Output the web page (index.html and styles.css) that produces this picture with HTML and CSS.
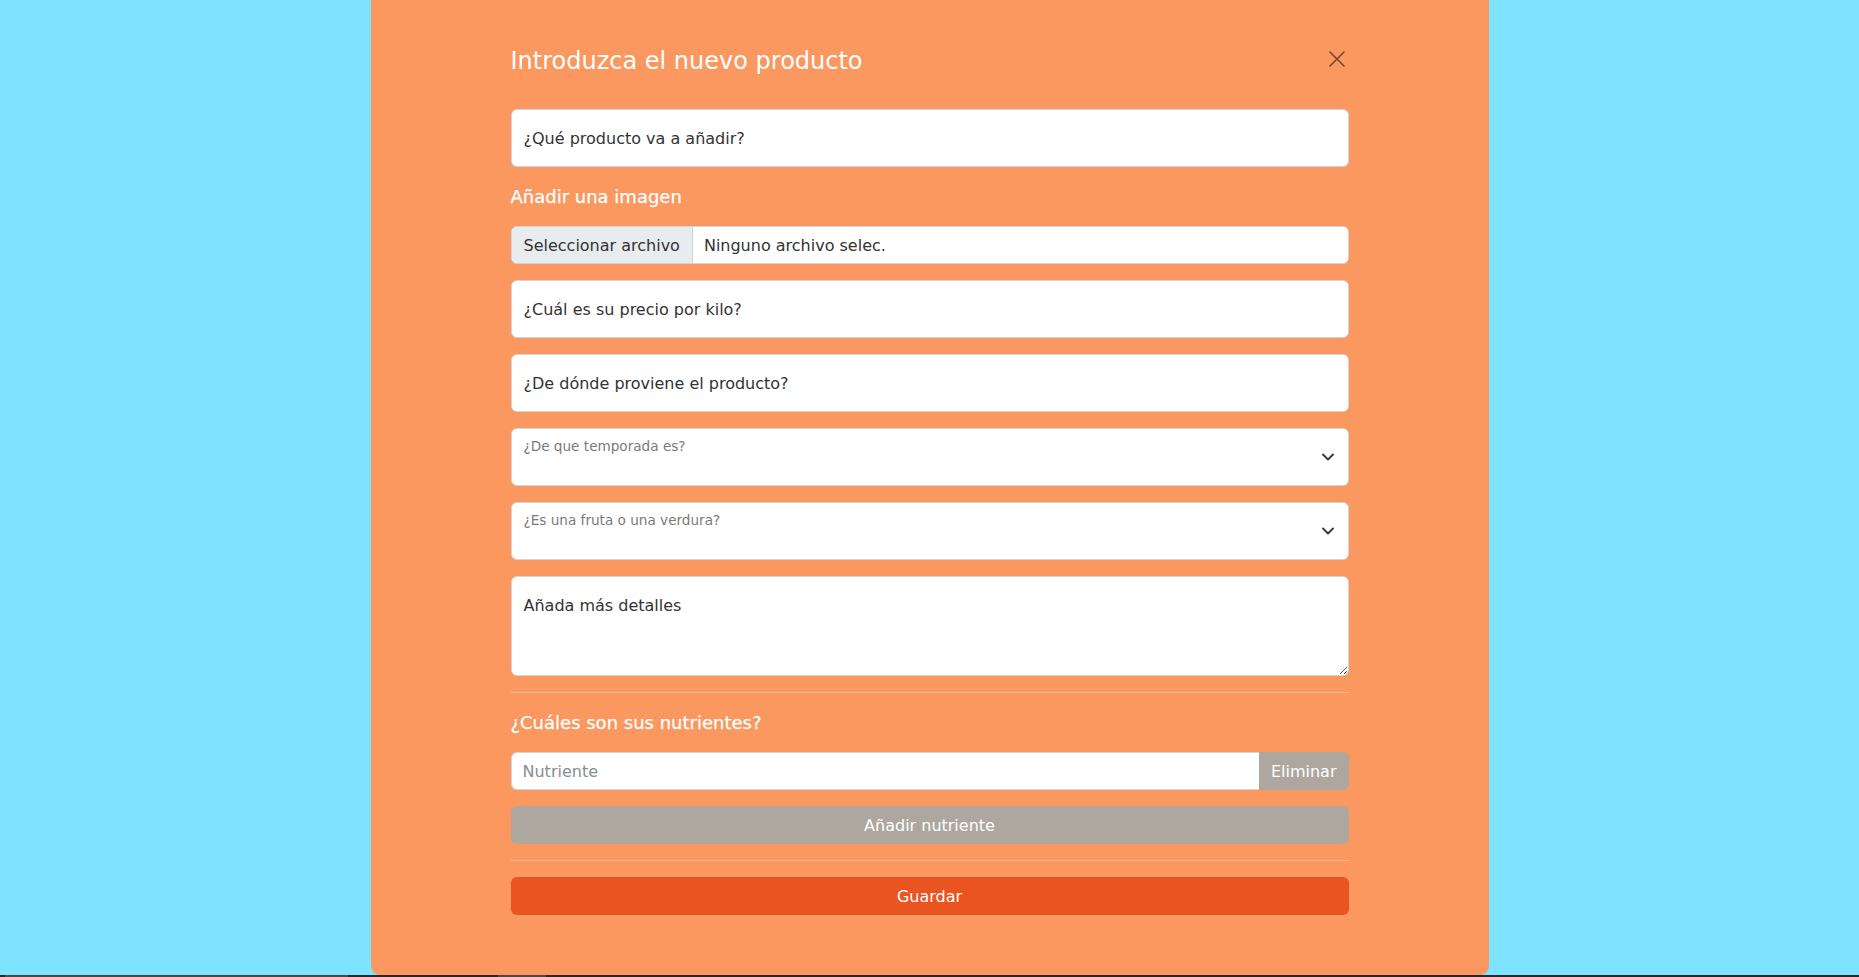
FILE: index.html
```html
<!DOCTYPE html>
<html lang="es">
<head>
<meta charset="utf-8">
<title>Nuevo producto</title>
<link rel="stylesheet" href="styles.css">
</head>
<body>
<main class="page">
  <section class="modal">
    <header class="modal-header">
      <h1 class="modal-title">Introduzca el nuevo producto</h1>
      <button class="btn-close" type="button" aria-label="Cerrar">
        <svg width="16" height="16" viewBox="0 0 16 16" aria-hidden="true"><path d="M1 1 15 15M15 1 1 15" stroke="#000" stroke-width="1.6" stroke-linecap="round" fill="none"/></svg>
      </button>
    </header>

    <form class="form">
      <input class="field" type="text" placeholder="¿Qué producto va a añadir?">

      <div class="section-label">Añadir una imagen</div>
      <div class="file">
        <span class="file-btn">Seleccionar archivo</span>
        <span class="file-name">Ninguno archivo selec.</span>
      </div>

      <input class="field" type="text" placeholder="¿Cuál es su precio por kilo?">
      <input class="field" type="text" placeholder="¿De dónde proviene el producto?">

      <div class="select">
        <span class="select-label">¿De que temporada es?</span>
        <svg class="chevron" width="12" height="8" viewBox="0 0 12 8" aria-hidden="true"><path d="M1 1.5 6 6.5 11 1.5" stroke="#343a40" stroke-width="1.9" stroke-linecap="round" stroke-linejoin="round" fill="none"/></svg>
      </div>
      <div class="select">
        <span class="select-label">¿Es una fruta o una verdura?</span>
        <svg class="chevron" width="12" height="8" viewBox="0 0 12 8" aria-hidden="true"><path d="M1 1.5 6 6.5 11 1.5" stroke="#343a40" stroke-width="1.9" stroke-linecap="round" stroke-linejoin="round" fill="none"/></svg>
      </div>

      <textarea class="details" placeholder="Añada más detalles"></textarea>

      <hr class="rule">

      <div class="section-title">¿Cuáles son sus nutrientes?</div>
      <div class="input-group">
        <input class="nutrient" type="text" placeholder="Nutriente">
        <button class="btn btn-secondary btn-remove" type="button">Eliminar</button>
      </div>
      <button class="btn btn-secondary btn-block" type="button">Añadir nutriente</button>

      <hr class="rule">

      <button class="btn btn-primary btn-block" type="button">Guardar</button>
    </form>
  </section>
</main>
<div class="taskbar"></div>
</body>
</html>
```

FILE: styles.css
```css
* { box-sizing: border-box; }

html, body {
  margin: 0;
  height: 977px;
  overflow: hidden;
}

body {
  background: #7de3ff;
  font-family: "DejaVu Sans", Verdana, sans-serif;
  font-size: 16px;
  color: #333;
  display: flex;
  flex-direction: column;
}

.page {
  flex: 1;
  display: flex;
  justify-content: center;
}

.modal {
  width: 1118px;
  height: 975px;
  background: #fa9860;
  border-radius: 0 0 9px 9px;
  padding: 0 140px;
}

.modal-header {
  display: flex;
  justify-content: space-between;
  align-items: flex-start;
  padding-top: 47px;
  margin-bottom: 33px;
}

.modal-title {
  margin: 0;
  font-size: 24px;
  line-height: 29px;
  font-weight: 400;
  color: #fff;
}

.btn-close {
  width: 24px;
  height: 24px;
  margin-top: 0;
  padding: 0;
  border: 0;
  background: transparent;
  opacity: 0.52;
  display: flex;
  align-items: center;
  justify-content: center;
}

.form {
  display: flex;
  flex-direction: column;
}

.field {
  height: 58px;
  margin: 0 0 16px;
  padding: 0 12px;
  border: 1px solid #ced4da;
  border-radius: 6px;
  background: #fff;
  font: inherit;
  color: #333;
}

.field::placeholder,
.details::placeholder {
  color: #333;
  opacity: 1;
}

.section-label {
  color: #fff;
  font-size: 18px;
  line-height: 27px;
  margin-bottom: 16px;
  -webkit-text-stroke: 0.25px #fff;
}

.file {
  display: flex;
  height: 38px;
  margin-bottom: 16px;
  border: 1px solid #ced4da;
  border-radius: 6px;
  background: #fff;
  overflow: hidden;
  line-height: 36px;
}

.file-btn {
  padding: 1px 12px 0;
  background: #e9ecef;
  border-right: 1px solid #ced4da;
}

.file-name {
  padding: 1px 11px 0;
}

.select {
  height: 58px;
  margin-bottom: 16px;
  border: 1px solid #ced4da;
  border-radius: 6px;
  background: #fff;
  display: flex;
  justify-content: space-between;
  align-items: center;
  padding: 0 14px 0 12px;
}

.select-label {
  align-self: flex-start;
  margin-top: 9px;
  font-size: 13.6px;
  line-height: 16px;
  color: #7a7a7a;
}

.chevron {
  margin-top: 0;
}

.details {
  height: 100px;
  margin: 0 0 16px;
  padding: 17px 12px 15px;
  border: 1px solid #ced4da;
  border-radius: 6px;
  background: #fff;
  font: inherit;
  line-height: 24px;
  color: #333;
  resize: vertical;
}

.rule {
  margin: 0 0 16px;
  border: 0;
  border-top: 1px solid rgba(255, 255, 255, 0.3);
  height: 0;
}

.section-title {
  color: #fff;
  font-size: 18px;
  line-height: 27px;
  margin-bottom: 16px;
  -webkit-text-stroke: 0.25px #fff;
}

.input-group {
  display: flex;
  height: 38px;
  margin-bottom: 16px;
}

.nutrient {
  flex: 1;
  min-width: 0;
  margin: 0;
  padding: 1px 11px 0;
  border: 1px solid #ced4da;
  border-right: 0;
  border-radius: 6px 0 0 6px;
  background: #fff;
  font: inherit;
  color: #333;
}

.nutrient::placeholder {
  color: #868e96;
  opacity: 1;
}

.btn {
  font: inherit;
  color: #fff;
  border: 0;
  border-radius: 6px;
  height: 38px;
  padding: 1px 12px 0;
  line-height: 37px;
}

.btn-secondary { background: #aea79f; }
.btn-primary { background: #e95420; }

.btn-remove {
  border-radius: 0 6px 6px 0;
}

.btn-block {
  width: 100%;
  text-align: center;
  margin-bottom: 16px;
}

.taskbar {
  height: 2px;
  flex: none;
  background: linear-gradient(to right,
    #2b2928 0 5px,
    #4a4847 5px 348px,
    #2b2928 348px 498px,
    #4a4847 498px 546px,
    #2b2928 546px 100%);
}
```
